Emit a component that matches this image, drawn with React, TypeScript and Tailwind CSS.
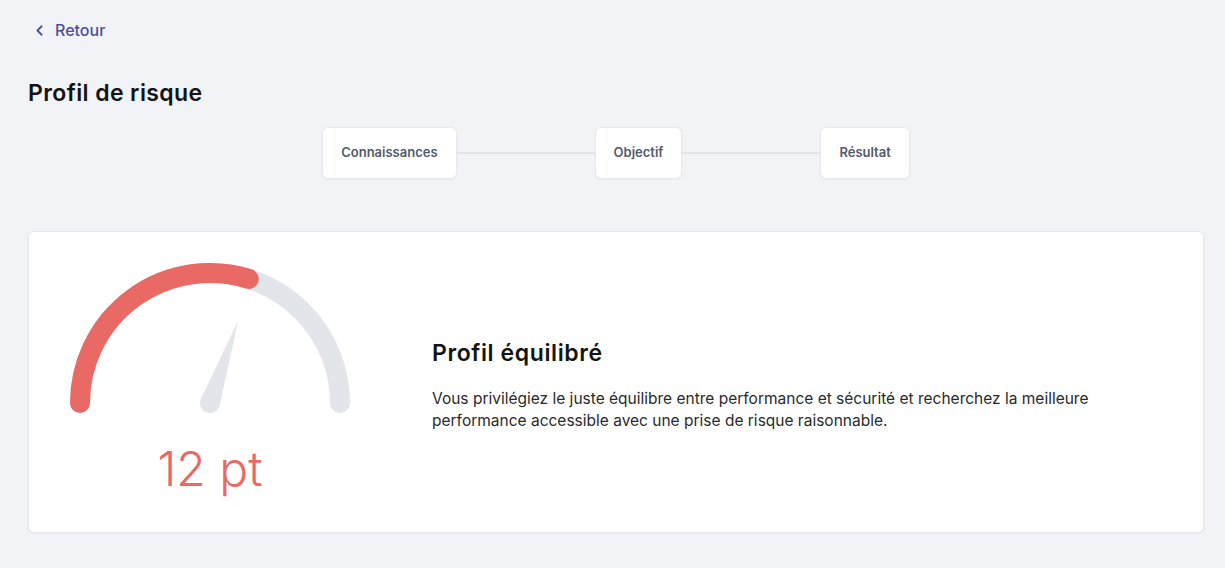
import { ChevronLeft } from 'lucide-react';

const steps = ["Connaissances", "Objectif", "Résultat"];

function Gauge() {
  return (
    <svg width="300" height="162" viewBox="0 0 300 162" className="block">
      <path d="M 20 150 A 130 130 0 0 1 280 150" fill="none" stroke="#e2e5ea" strokeWidth="20" strokeLinecap="round" />
      <path d="M 20 150 A 130 130 0 0 1 188.7 25.9" fill="none" stroke="#e96964" strokeWidth="20" strokeLinecap="round" />
      <path d="M 140.5 146.8 L 178 68 L 159.5 153.2 A 10 10 0 0 1 140.5 146.8 Z" fill="#e2e5ea" />
    </svg>
  );
}

export default function App() {
  return (
    <div className="min-h-[568px] bg-[#f2f3f7] pl-7 pr-[21px] pt-[18px] font-['Inter',sans-serif]">
      <button className="flex items-center gap-[7px] pl-[3px] text-[16px] font-medium text-[#4b509c]">
        <ChevronLeft size={17} strokeWidth={2.5} />
        <span>Retour</span>
      </button>

      <h1 className="mt-[36px] text-[23px] font-semibold leading-[30px] tracking-[0.4px] text-[#141414]">
        Profil de risque
      </h1>

      <div className="mt-[19px] flex items-center justify-center">
        {steps.map((s, i) => (
          <div key={s} className="flex items-center">
            {i > 0 && <div className="h-[2px] w-[138px] bg-[#e3e5ea]" />}
            <div className="flex h-[52px] items-center rounded-md border border-[#e6e8ee] bg-white px-[18px] text-[13px] font-semibold text-[#545a6b] shadow-[0_1px_2px_rgba(0,0,0,0.04)]">
              {s}
            </div>
          </div>
        ))}
      </div>

      <div className="mt-[52px] flex h-[302px] items-center rounded-md border border-[#e6e7ee] bg-white pl-[31px] pr-8 shadow-[0_1px_3px_rgba(0,0,0,0.05)]">
        <div className="flex flex-col items-center self-start pt-[21px]">
          <Gauge />
          <div className="mt-[30px] text-[48px] font-light leading-none text-[#e96964]">12 pt</div>
        </div>
        <div className="ml-[72px] pt-[6px]">
          <h2 className="text-[23px] font-semibold leading-[28px] tracking-[0.6px] text-[#141414]">Profil équilibré</h2>
          <p className="mt-[21px] max-w-[670px] text-[15.5px] leading-[22px] text-[#2a2a2a]">
            Vous privilégiez le juste équilibre entre performance et sécurité et recherchez la meilleure performance accessible avec une prise de risque raisonnable.
          </p>
        </div>
      </div>
    </div>
  );
}
